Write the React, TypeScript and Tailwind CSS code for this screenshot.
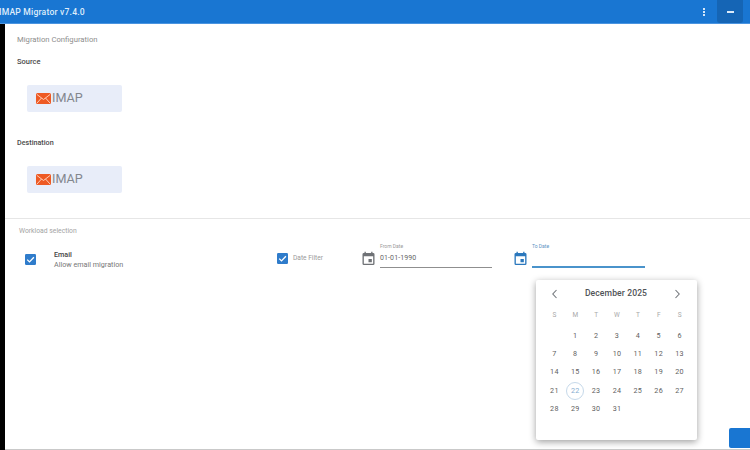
const days = ["S", "M", "T", "W", "T", "F", "S"];
const dates = [
  "", "1", "2", "3", "4", "5", "6",
  "7", "8", "9", "10", "11", "12", "13",
  "14", "15", "16", "17", "18", "19", "20",
  "21", "22", "23", "24", "25", "26", "27",
  "28", "29", "30", "31",
];

function ImapLogo() {
  return (
    <div className="w-[95px] h-[27px] bg-[#e8edf9] rounded-[2px] flex items-center pl-[9px]">
      <svg width="15" height="11" viewBox="0 0 15 11" aria-hidden="true">
        <rect width="15" height="11" rx="1.5" fill="#ee5a24" />
        <path d="M1 1.5 7.5 6.5 14 1.5M1 10 5.5 5M14 10 9.5 5" fill="none" stroke="#ffd9c7" strokeWidth="0.9" />
      </svg>
      <span className="ml-[1px] text-[12.6px] leading-none text-[#83878e]">IMAP</span>
    </div>
  );
}

function CheckBox() {
  return (
    <svg width="11" height="11" viewBox="0 0 11 11" aria-hidden="true" className="shrink-0">
      <rect width="11" height="11" rx="1.2" fill="#2f7ccb" />
      <path d="M2.2 5.6 4.5 7.9 8.9 3.2" fill="none" stroke="#fff" strokeWidth="1.3" />
    </svg>
  );
}

function CalendarIcon({ color }: { color: string }) {
  return (
    <svg width="13" height="14" viewBox="3 1 18 21" aria-hidden="true" className="shrink-0">
      <path
        fill={color}
        d="M19 4h-1V2h-2v2H8V2H6v2H5a2 2 0 0 0-2 2v14a2 2 0 0 0 2 2h14a2 2 0 0 0 2-2V6a2 2 0 0 0-2-2Zm0 16H5V9h14v11ZM12 13h5v5h-5v-5Z"
      />
    </svg>
  );
}

function Chevron({ d }: { d: string }) {
  return (
    <svg width="8" height="10" viewBox="0 0 8 10" aria-hidden="true">
      <path d={d} fill="none" stroke="#73777c" strokeWidth="1.1" />
    </svg>
  );
}

export default function App() {
  return (
    <div className="relative w-[750px] h-[450px] overflow-hidden bg-white flex flex-col font-['Roboto',sans-serif]">
      <header className="h-[24px] shrink-0 bg-[#1976d2] border-b border-[#4a94e0] flex items-center justify-between">
        <span className="-ml-[1px] mt-[1px] text-[8.6px] font-medium tracking-[0.2px] text-[#dfecfa]">IMAP Migrator v7.4.0</span>
        <div className="flex items-center h-full">
          <div className="flex flex-col gap-[1px] mr-[12px]">
            <span className="w-[2px] h-[2px] bg-[#d5e6f8]" />
            <span className="w-[2px] h-[2px] bg-[#d5e6f8]" />
            <span className="w-[2px] h-[2px] bg-[#d5e6f8]" />
          </div>
          <div className="w-[26px] h-full mr-[7px] bg-[#1565b5] flex items-center justify-center rounded-b-[3px]">
            <span className="w-[7px] h-[2px] bg-[#dcebfa]" />
          </div>
        </div>
      </header>

      <div className="flex-1 flex min-h-0">
        <div className="w-[5px] shrink-0 bg-black" />
        <main className="flex-1 flex flex-col min-w-0 border-b border-[#c9c9c9]">
          <div className="pl-[12px] pt-[10px] h-[195px] shrink-0 border-b border-[#e6e6e6]">
            <h1 className="text-[7.7px] leading-[11px] text-[#8d8d8d]">Migration Configuration</h1>
            <h2 className="mt-[12px] text-[7.5px] leading-[10px] font-medium text-[#4a4a4a]">Source</h2>
            <div className="mt-[18px] ml-[10px]"><ImapLogo /></div>
            <h2 className="mt-[26px] text-[7.2px] leading-[10px] font-medium text-[#4a4a4a]">Destination</h2>
            <div className="mt-[18px] ml-[10px]"><ImapLogo /></div>
          </div>

          <div className="pl-[14px] pt-[7px]">
            <p className="text-[6.8px] leading-[10px] text-[#a3a3a3]">Workload selection</p>
            <div className="flex items-start mt-[7px]">
              <div className="ml-[6px] mt-[11px]"><CheckBox /></div>
              <div className="ml-[18px] mt-[7px] w-[223px]">
                <p className="text-[7.2px] leading-[10px] font-medium text-[#444]">Email</p>
                <p className="text-[7.2px] leading-[10px] text-[#777]">Allow email migration</p>
              </div>
              <div className="mt-[9.5px]"><CheckBox /></div>
              <span className="ml-[5px] w-[69px] mt-[9.5px] text-[6.6px] leading-[11px] text-[#9a9a9a]">Date Filter</span>
              <div className="mt-[8px]"><CalendarIcon color="#6f7276" /></div>
              <div className="ml-[5px] w-[112px] h-[25px] border-b border-[#8f8f8f]">
                <p className="text-[5px] leading-[7px] text-[#9a9a9a]">From Date</p>
                <p className="mt-[3px] text-[7px] leading-[10px] tracking-[0.1px] text-[#666]">01-01-1990</p>
              </div>
              <div className="ml-[22px] mt-[8px]"><CalendarIcon color="#2b78bd" /></div>
              <div className="ml-[5px] w-[113px] h-[25px] border-b-2 border-[#4a93cb]">
                <p className="text-[5px] leading-[7px] text-[#5d94c4]">To Date</p>
              </div>
            </div>
          </div>

          <div className="mt-auto flex justify-end pb-[1px]">
            <div className="w-[21px] h-[20px] bg-[#1976d2] rounded-l-[2px]" />
          </div>
        </main>
      </div>

      <div className="absolute left-[536px] top-[280px] w-[161px] h-[160px] bg-white rounded-[2px] shadow-[0_2px_7px_rgba(0,0,0,0.38)]">
        <div className="h-[27px] flex items-center justify-between pl-[15px] pr-[16px]">
          <Chevron d="M5.5 1 1.8 5l3.7 4" />
          <span className="text-[8.6px] font-medium tracking-[0.1px] text-[#505357]">December 2025</span>
          <Chevron d="M2.5 1 6.2 5 2.5 9" />
        </div>
        <div className="mx-[8px] w-[146px] grid grid-cols-7 auto-rows-[18.4px] text-center items-center">
          {days.map((d, i) => (
            <span key={i} className="text-[6.5px] text-[#a8a8a8]">{d}</span>
          ))}
          {dates.map((d, i) => (
            <span key={i} className="flex items-center justify-center pt-[3px] h-[18.4px] text-[7.2px] tracking-[0.3px] text-[#5f5f5f]">
              {d === "22" ? (
                <span className="w-[18px] h-[18px] rounded-full border border-[#c6d9ea] flex items-center justify-center text-[#86add1]">{d}</span>
              ) : (
                d
              )}
            </span>
          ))}
        </div>
      </div>
    </div>
  );
}
